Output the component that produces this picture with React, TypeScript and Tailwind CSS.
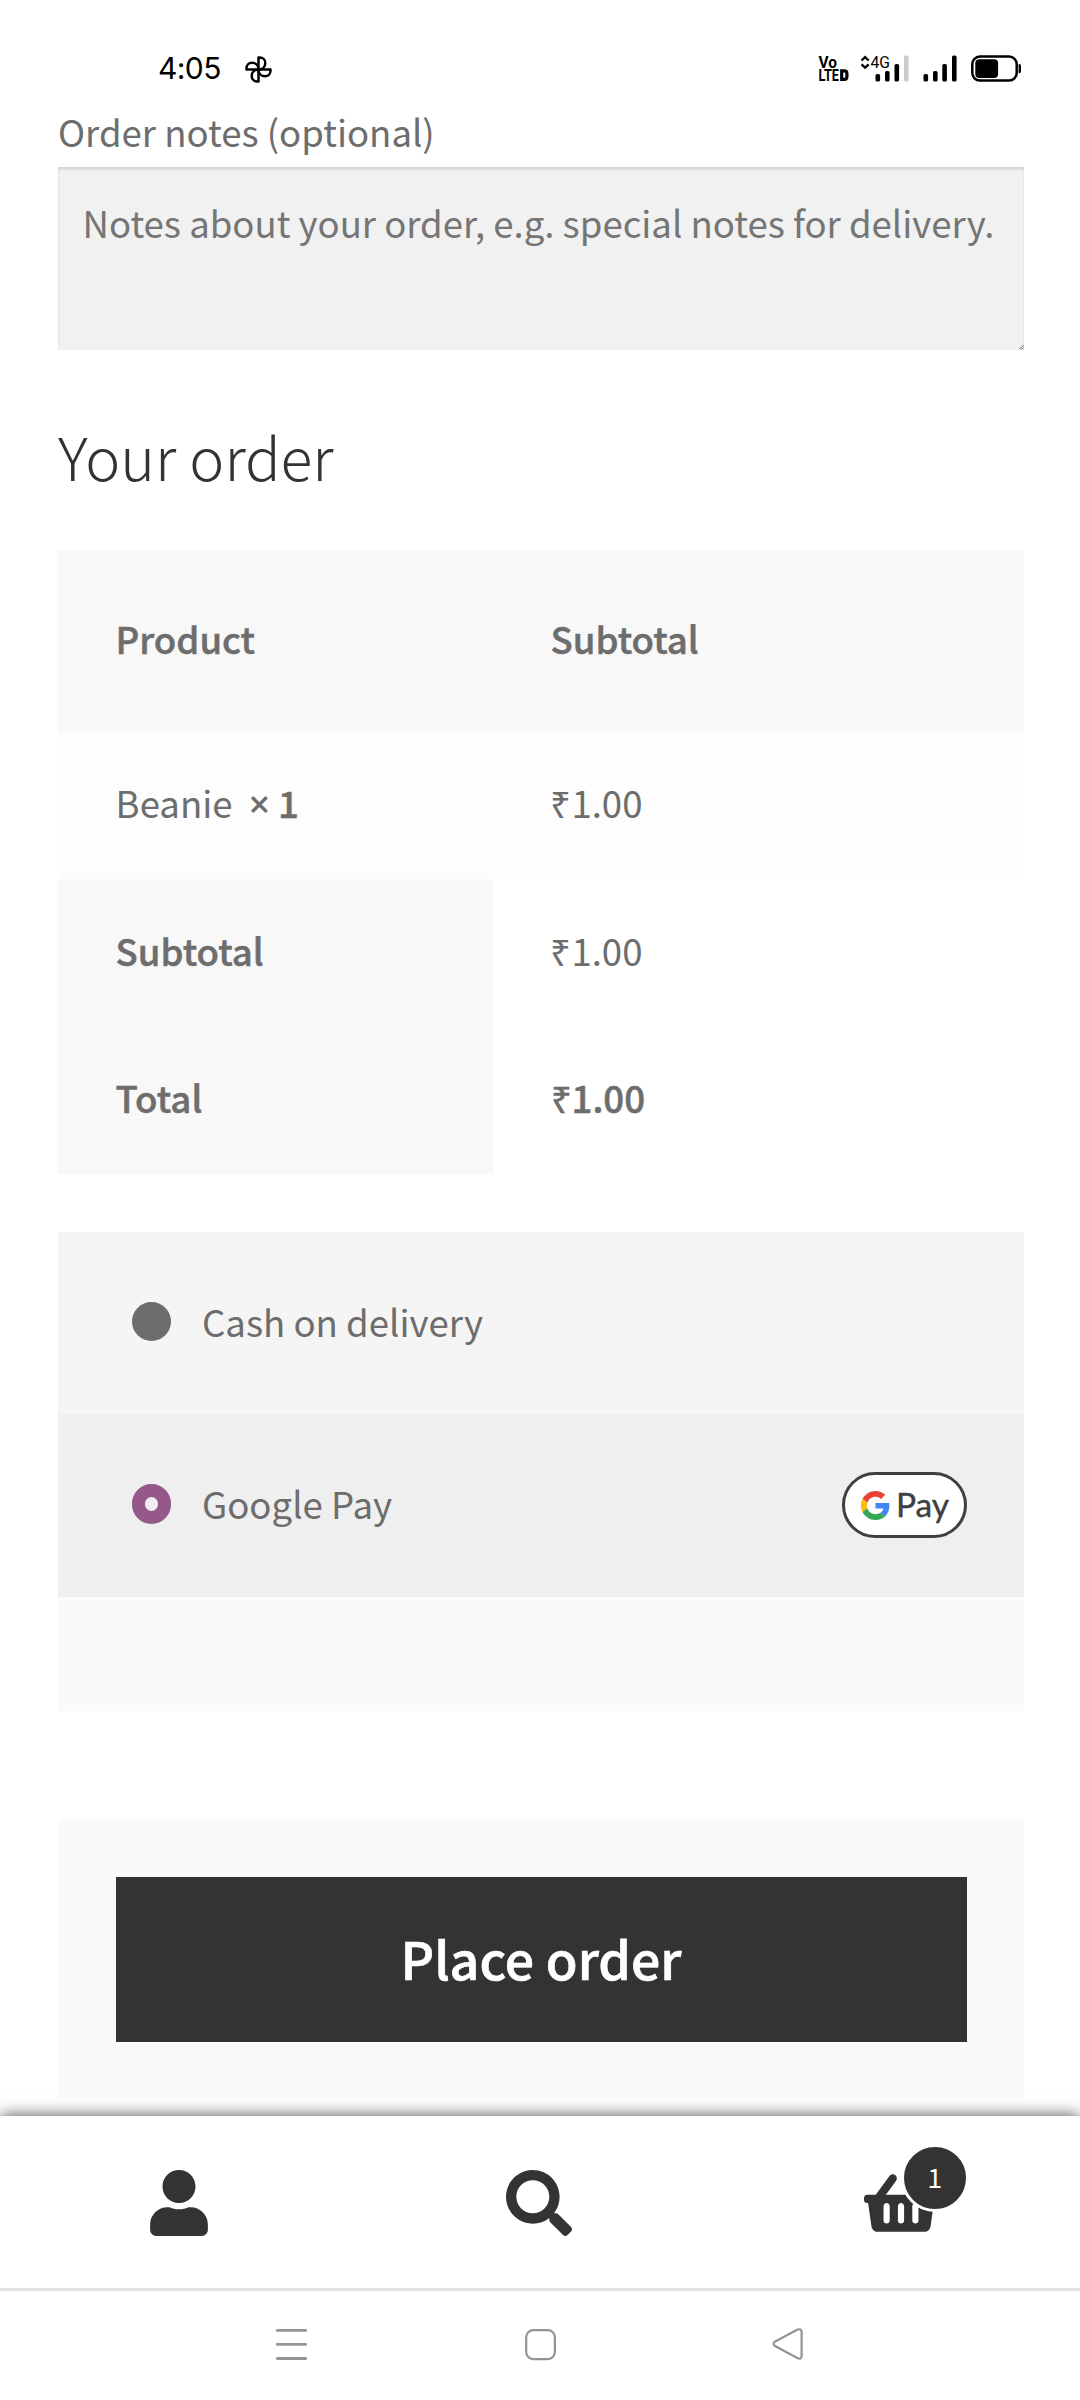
import React from "react";
import { FaSearch, FaShoppingBasket, FaUser } from "react-icons/fa";

function PinwheelIcon() {
  const petal = "M13.5 13.5V1.5h1.2c3.2 0 5.6 2.3 5.6 5.4c0 3.6-2.6 6.6-6.8 6.6z";
  return (
    <svg width="27" height="27" viewBox="0 0 27 27" fill="none" stroke="#000" strokeWidth="2.5" strokeLinejoin="round">
      {[0, 90, 180, 270].map((angle) => (
        <path key={angle} d={petal} transform={`rotate(${angle} 13.5 13.5)`} />
      ))}
    </svg>
  );
}

function StatusIndicators() {
  return (
    <svg width="210" height="36" viewBox="815 50 210 36" fontFamily="Roboto, sans-serif" fill="#000">
      <g fontWeight="700" fontSize="16.5">
        <text x="818.5" y="67.6" textLength="18.5" lengthAdjust="spacingAndGlyphs">Vo</text>
        <text x="818.5" y="81" textLength="20.5" lengthAdjust="spacingAndGlyphs">LTE</text>
      </g>
      <path d="M841.7 70.8h2.6q2.6 0 2.6 2.6v3.4q0 2.6-2.6 2.6h-2.6z" fill="none" stroke="#000" strokeWidth="3.2" />
      <path d="M861.5 60.5l3.6-3.4l3.6 3.4M861.5 64.3l3.6 3.4l3.6-3.4" fill="none" stroke="#000" strokeWidth="2.3" />
      <text x="870.5" y="68" fontSize="17" fontWeight="400" textLength="19.5" lengthAdjust="spacingAndGlyphs">4G</text>
      <rect x="875.5" y="74" width="4.6" height="7.5" rx="1.6" />
      <rect x="885" y="71" width="4.6" height="10.5" rx="1.6" />
      <rect x="894.5" y="64" width="4.6" height="17.5" rx="1.6" />
      <rect x="904" y="55.5" width="4.6" height="26" rx="1.6" fill="#ccc" />
      <rect x="923.5" y="74" width="4.6" height="7.5" rx="1.6" />
      <rect x="933" y="71" width="4.6" height="10.5" rx="1.6" />
      <rect x="942.3" y="64" width="4.6" height="17.5" rx="1.6" />
      <rect x="952" y="55.5" width="4.6" height="26" rx="1.6" />
      <rect x="972.3" y="56.6" width="44.4" height="24" rx="7.5" fill="none" stroke="#000" strokeWidth="2.5" />
      <rect x="975.3" y="59.3" width="22.8" height="18.6" rx="4" />
      <path d="M1018.6 64h0.6q1.8 0 1.8 1.8v5.6q0 1.8-1.8 1.8h-0.6z" />
    </svg>
  );
}

function StatusBar() {
  return (
    <div className="flex h-[111px] items-start justify-between pr-[55px] pl-[158px]">
      <div className="flex pt-[52px]">
        <span className="w-[87px] font-['Inter',sans-serif] text-[30px] leading-[32px] tracking-[-0.6px] text-black">4:05</span>
        <div className="pt-[4px]">
          <PinwheelIcon />
        </div>
      </div>
      <div className="pt-[50px]">
        <StatusIndicators />
      </div>
    </div>
  );
}

const strong = "font-medium [-webkit-text-stroke:0.5px_#6d6d6d]";

function OrderTable() {
  return (
    <div className="grid grid-cols-[435px_531px] leading-[60px]">
      <div className={`flex h-[181px] items-center bg-[#f8f8f8] pb-[3px] pl-[57.6px] ${strong}`}>Product</div>
      <div className={`flex h-[181px] items-center bg-[#f8f8f8] pb-[3px] pl-[57.6px] ${strong}`}>Subtotal</div>

      <div className="flex h-[148px] items-center bg-[#fdfdfd] pb-[4px] pl-[57.6px]">
        <span className="w-[133px]">Beanie</span>
        <span className="w-[29.5px] font-['Open_Sans',sans-serif] text-[38px] font-semibold">×</span>
        <span className={strong}>1</span>
      </div>
      <div className="flex h-[148px] items-center bg-[#fdfdfd] pb-[4px] pl-[57.4px]">₹1.00</div>

      <div className={`flex h-[148px] items-center bg-[#f8f8f8] pb-[4px] pl-[57.6px] ${strong}`}>Subtotal</div>
      <div className="flex h-[148px] items-center pb-[4px] pl-[57.4px]">₹1.00</div>

      <div className={`flex h-[147px] items-center bg-[#f8f8f8] pb-[5px] pl-[57.6px] ${strong}`}>Total</div>
      <div className={`flex h-[147px] items-center pb-[5px] pl-[57.6px] ${strong}`}>₹1.00</div>
    </div>
  );
}

function GooglePayBadge() {
  return (
    <div className="mt-[2px] flex h-[66px] w-[125px] items-center rounded-full border-[3px] border-[#3c4043] bg-white pl-[16px]">
      <svg width="29" height="29" viewBox="0 0 48 48">
        <path fill="#ea4335" d="M24 9.5c3.54 0 6.71 1.22 9.21 3.6l6.85-6.85C35.9 2.38 30.47 0 24 0 14.62 0 6.51 5.38 2.56 13.22l7.98 6.19C12.43 13.72 17.74 9.5 24 9.5z" />
        <path fill="#4285f4" d="M46.98 24.55c0-1.57-.15-3.09-.38-4.55H24v9.02h12.94c-.58 2.96-2.26 5.48-4.78 7.18l7.73 6c4.51-4.18 7.09-10.36 7.09-17.65z" />
        <path fill="#fbbc05" d="M10.53 28.59c-.48-1.45-.76-2.99-.76-4.59s.27-3.14.76-4.59l-7.98-6.19C.92 16.46 0 20.12 0 24c0 3.88.92 7.54 2.56 10.78l7.97-6.19z" />
        <path fill="#34a853" d="M24 48c6.48 0 11.93-2.13 15.89-5.81l-7.73-6c-2.15 1.45-4.92 2.3-8.16 2.3-6.26 0-11.57-4.22-13.47-9.91l-7.98 6.19C6.51 42.62 14.62 48 24 48z" />
      </svg>
      <span className="ml-[6px] pb-[2px] font-['Lato',sans-serif] text-[33.5px] leading-[40px] text-[#3c4043] [-webkit-text-stroke:0.4px_#3c4043]">Pay</span>
    </div>
  );
}

function PaymentMethods() {
  return (
    <div className="mt-[58px] h-[479px] bg-[#fafafa]">
      <label className="flex h-[182px] items-center bg-[#f5f5f5] pb-[2px] pl-[73.5px]">
        <span className="mr-[31px] mb-[1px] h-[39.5px] w-[39.5px] rounded-full bg-[#6d6d6d]" />
        Cash on delivery
      </label>
      <label className="flex h-[183px] items-center bg-[#efefef] pr-[57px] pb-[3px] pl-[73.5px]">
        <span className="mr-[31px] h-[39.5px] w-[39.5px] rounded-full border-[13px] border-[#96588a]" />
        <span className="flex-1 pt-[1px]">Google Pay</span>
        <GooglePayBadge />
      </label>
    </div>
  );
}

function FooterBar() {
  return (
    <div className="relative mt-[17px] flex h-[172px] bg-white text-[#333] shadow-[0_0_15.7px_rgba(0,0,0,0.7)]">
      <div className="flex flex-1 justify-center pt-[54px] pr-[1px]">
        <FaUser size={66} />
      </div>
      <div className="flex flex-1 justify-center pt-[54px] pl-[1px]">
        <FaSearch size={66} />
      </div>
      <div className="flex flex-1 justify-center pt-[54px] pl-[3px]">
        <div className="relative h-[66px] w-[74px]">
          <FaShoppingBasket className="h-[66px] w-[74px]" />
          <span className="absolute -top-[26px] left-[37px] flex h-[68px] w-[68px] items-center justify-center rounded-full border-[3px] border-white bg-[#333] pb-[2px] text-[27px] leading-[40px] text-white">
            1
          </span>
        </div>
      </div>
    </div>
  );
}

function SystemNav() {
  return (
    <div className="relative flex h-[112px] justify-between border-t-[3px] border-[#e2e2e2] bg-white pt-[37px] pr-[276px] pl-[275px]">
      <svg width="33" height="34" viewBox="275 2328 33 34" stroke="#949494" strokeWidth="2.8" strokeLinecap="round">
        <path d="M277.3 2330.4h28.4M277.3 2344.4h28.4M277.3 2358.5h28.4" />
      </svg>
      <svg width="33" height="34" viewBox="524 2328 33 34" fill="none" stroke="#949494" strokeWidth="2.2">
        <rect x="526.2" y="2330.2" width="28.7" height="28.9" rx="7" />
      </svg>
      <svg width="32" height="34" viewBox="771 2328 32 34" fill="none" stroke="#949494" strokeWidth="2.2">
        <path d="M773.7 2341.8L796.1 2329.8q4.3-1.8 4.5 2.2V2356q-.2 4-4.3 2L773.7 2345.8q-2.4-2 0-4z" />
      </svg>
    </div>
  );
}

export default function App() {
  return (
    <div className="flex h-[2400px] w-[1080px] flex-col overflow-hidden bg-white font-['Noto_Sans_CJK_SC',sans-serif] text-[36.6px] text-[#6d6d6d]">
      <StatusBar />
      <main className="pr-[56px] pl-[58px]">
        <div className="h-[56px] text-[36.55px] leading-[42px]">Order notes (optional)</div>
        <div className="relative h-[183px] bg-[#f1f1f1] pt-[31px] pl-[24.5px] text-[36.55px] leading-[50px] whitespace-nowrap text-[#757575] shadow-[inset_0_2.6px_2.6px_rgba(0,0,0,0.125)]">
          Notes about your order, e.g. special notes for delivery.
          <svg className="absolute right-[0.5px] bottom-[0.5px]" width="5" height="5" viewBox="0 0 5 5" stroke="#555" strokeWidth="0.9">
            <path d="M0 4.5L4.5 0M2.5 4.5L4.5 2.5" />
          </svg>
        </div>
        <h2 className="flex h-[200px] items-center pt-[12px] text-[59px] leading-[80px] font-light text-[#333]">Your order</h2>
        <OrderTable />
        <PaymentMethods />
        <div className="mt-[108px] h-[280px] bg-[#fafafa] px-[58px] pt-[58px]">
          <button className="flex h-[165px] w-[851px] items-center justify-center bg-[#333] pr-[1px] pb-[4px] text-[51.8px] leading-[70px] font-medium text-white [-webkit-text-stroke:0.7px_#fff]">
            Place order
          </button>
        </div>
      </main>
      <FooterBar />
      <SystemNav />
    </div>
  );
}
